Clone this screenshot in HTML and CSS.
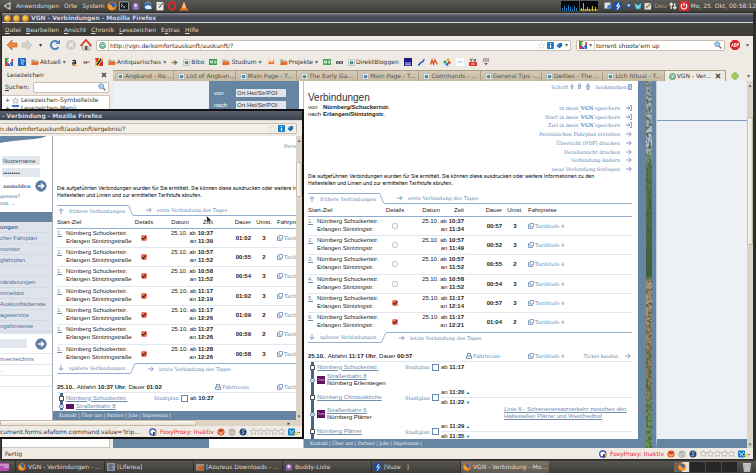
FILE: index.html
```html
<!DOCTYPE html>
<html lang="de">
<head>
<meta charset="utf-8">
<title>VGN - Verbindungen</title>
<link rel="stylesheet" href="styles.css">
</head>
<body>
<svg class="defs" aria-hidden="true">
  <symbol id="right" viewBox="0 0 6 6"><path d="M0 3H5M3 .7L5.3 3L3 5.3" fill="none" stroke="currentColor" stroke-width=".8"/></symbol>
  <symbol id="rightbar" viewBox="0 0 6 6"><path d="M0 3H4M2.2 1.2L4 3L2.2 4.8M5.4 .3V5.7M4 .4H5.6M4 5.6H5.6" fill="none" stroke="currentColor" stroke-width=".8"/></symbol>
  <symbol id="up" viewBox="0 0 6 6"><path d="M3 6V1M.7 3L3 .7L5.3 3" fill="none" stroke="currentColor" stroke-width=".8"/></symbol>
  <symbol id="down" viewBox="0 0 6 6"><path d="M3 0V5M.7 3L3 5.3L5.3 3" fill="none" stroke="currentColor" stroke-width=".8"/></symbol>
  <symbol id="size" viewBox="0 0 4 7"><path d="M2 .6L.6 3H3.4ZM1.2 3V5.6H2.8V3" fill="none" stroke="currentColor" stroke-width=".7"/></symbol>
  <symbol id="copy" viewBox="0 0 6 6"><path d="M2 .5H5.5V4H2ZM1.2 1.5H.5V5.5H4.5V4.6" fill="none" stroke="currentColor" stroke-width=".8"/></symbol>
  <symbol id="print" viewBox="0 0 6 6"><path d="M1.5 3V.5H4.5V3M.5 3H5.5V5.4H.5Z" fill="none" stroke="currentColor" stroke-width=".9"/></symbol>
  <symbol id="page" viewBox="0 0 7 7"><rect x=".5" y=".5" width="6" height="6" rx=".6" fill="#f4f4f2" stroke="#9aa3a8" stroke-width=".6"/><circle cx="3.5" cy="3.6" r="1.9" fill="#3f7fb5"/><path d="M2.2 3l1.3-.8l.6 1.2l-1 1.4z" fill="#7db34a"/></symbol>
  <symbol id="vgn" viewBox="0 0 7 7"><circle cx="3.5" cy="3.5" r="3" fill="#fff" stroke="#1f8a5a" stroke-width=".9"/><path d="M1.2 4.3L3.5 1.6L5.8 4.3M1.5 5H5.5" fill="none" stroke="#1f8a5a" stroke-width="1"/></symbol>
  <symbol id="folder" viewBox="0 0 8 7"><path d="M.3 1H3l.6 1H7V6.3H.3Z" fill="#b9a58e"/><path d="M1.3 3.4H7.8L7 6.6H.3Z" fill="#f0682c"/></symbol>
  <symbol id="firefox" viewBox="0 0 10 10"><circle cx="5" cy="5" r="4.6" fill="#e8701c"/><circle cx="5.2" cy="4.2" r="2.9" fill="#2f64ad"/><path d="M.6 3C2 2.5 3 4 5 4.2C4.3 5.6 5.5 7 8.8 6.2C7 9.6 2 10 .8 6.6Z" fill="#f59a24"/></symbol>
  <symbol id="google" viewBox="0 0 8 8"><rect width="4" height="4" fill="#2a9b3e"/><rect x="4" width="4" height="4" fill="#fff"/><rect y="4" width="3" height="4" fill="#e4362c"/><rect x="3" y="4" width="5" height="4" fill="#2b62c9"/><path d="M3 1.5H5.6V4.5H3ZM4 5L6 7.5" fill="none" stroke="#fff" stroke-width="1"/><rect x="6.3" y="1" width="1.7" height="3" fill="#e4362c"/></symbol>
  <symbol id="lens" viewBox="0 0 8 8"><path d="M4.8 4.8L7.4 7.4" stroke="#8b8174" stroke-width="1.6"/><circle cx="3.2" cy="3.2" r="2.5" fill="#a9cbee" stroke="#6d93bf" stroke-width=".8"/></symbol>
  <symbol id="star" viewBox="0 0 7 7"><path d="M3.5 .6L4.4 2.6L6.6 2.8L5 4.3L5.5 6.4L3.5 5.3L1.5 6.4L2 4.3L.4 2.8L2.6 2.6Z" fill="#f7f5f1" stroke="#9e9b95" stroke-width=".6"/></symbol>
  <symbol id="faint" viewBox="0 0 7 7"><path d="M3.5 .6L4.4 2.6L6.6 2.8L5 4.3L5.5 6.4L3.5 5.3L1.5 6.4L2 4.3L.4 2.8L2.6 2.6Z" fill="#fff" stroke="#cfccc6" stroke-width=".6"/></symbol>
  <symbol id="info" viewBox="0 0 7 7"><rect width="7" height="7" rx=".8" fill="#1c80c4"/><path d="M3.5 1V2M3.5 2.8V6" stroke="#fff" stroke-width="1.2"/></symbol>
  <symbol id="tag" viewBox="0 0 7 7"><path d="M.6 4.2L2.2 1.4L5.6 .8L6.4 3.6L3.8 6.3Z" fill="#1b66b4"/><path d="M1.5 4L3.8 1.8" stroke="#6ab2e6" stroke-width=".8"/></symbol>
  <symbol id="cross" viewBox="0 0 6 6"><path d="M1 1L5 5M5 1L1 5" stroke="#55534e" stroke-width="1.7"/></symbol>
  <symbol id="g" viewBox="0 0 8 8"><circle cx="3.8" cy="4" r="3.1" fill="#fff" stroke="#2440a8" stroke-width="1.1"/><rect x="4" y="4" width="1.8" height="3.6" fill="#273b8c"/><rect x="6" y="3" width="1.6" height="4.6" fill="#e6a33a"/></symbol>
  <symbol id="fox" viewBox="0 0 8 8"><circle cx="4" cy="4" r="3.6" fill="#d8552a"/><path d="M1 2.5L4 5L7 2.5L5.2 6.6H2.8Z" fill="#f7b48a"/><path d="M2 2L3.6 3.2M6 2L4.4 3.2" stroke="#7e2a14" stroke-width=".8"/></symbol>
  <symbol id="face" viewBox="0 0 8 8"><circle cx="4" cy="4.2" r="3.2" fill="#e5e2da" stroke="#95928b" stroke-width=".8"/><path d="M2 3H6M2.6 5.2H5.4" stroke="#85827c" stroke-width=".8"/></symbol>
  <symbol id="swirl" viewBox="0 0 8 8"><circle cx="4" cy="4" r="3.5" fill="#26446d"/><path d="M5.8 2.2C3.4 1.5 2.5 3.5 4.2 4.1C5.8 4.8 4.6 6.3 2.4 5.6" fill="none" stroke="#b9cfe6" stroke-width=".9"/></symbol>
  <symbol id="bug" viewBox="0 0 12 8"><rect width="7" height="7" y=".5" rx=".8" fill="#1480c0"/><path d="M1 2L3.5 4.2L6 2M1.6 6L3.5 4.2L5.4 6" fill="none" stroke="#d5efff" stroke-width=".9"/><circle cx="8.4" cy="5.4" r="1.9" fill="#f0d443"/><path d="M10.2 4H12L11.1 5.6Z" fill="#333"/></symbol>
  <symbol id="go" viewBox="0 0 12 12"><circle cx="6" cy="6" r="5.4" fill="#55779c" stroke="#88a1bb" stroke-width=".8"/><path d="M3 6H8.4M6 3.4L8.7 6L6 8.6" fill="none" stroke="#fff" stroke-width="1.4"/></symbol>
</svg>

<header class="panel">
  <svg class="distro" viewBox="0 0 8 8"><circle cx="4" cy="4" r="2.3" fill="none" stroke="#dcd9d2" stroke-width="1"/><circle cx="1.2" cy="4" r="1.1" fill="#dcd9d2"/><circle cx="5.6" cy="1.4" r="1.1" fill="#dcd9d2"/><circle cx="5.6" cy="6.6" r="1.1" fill="#dcd9d2"/></svg>
  <nav class="panel-menu"><a href="#">Anwendungen</a><a href="#">Orte</a><a href="#">System</a></nav>
  <div class="launchers">
    <svg class="i10"><use href="#firefox"/></svg>
    <svg class="i10" viewBox="0 0 10 10"><rect x=".5" y="1" width="9" height="8" fill="#161c22" stroke="#a8b0b6" stroke-width=".8"/><path d="M2 3L3.6 4.4L2 5.8M4 6H6" fill="none" stroke="#fff" stroke-width=".8"/></svg>
    <svg class="i10" viewBox="0 0 10 10"><path d="M2 9C0 5 2 1 5 1C9 1 9 5 8 9Z" fill="#7d5a9d"/><circle cx="4.6" cy="4.2" r="1.7" fill="#ddd0ea"/><path d="M3 7H7" stroke="#c7a8d8"/></svg>
    <svg class="i10" viewBox="0 0 10 10"><ellipse cx="5" cy="5.4" rx="4.6" ry="3.9" fill="#2f69ac"/><path d="M2 6.6C2 4 5 3.5 8 5L8.6 8H3Z" fill="#e9eef4"/><path d="M2 3C4 0 7 1 8 3" fill="none" stroke="#7fb0de"/></svg>
    <svg class="i10" viewBox="0 0 10 10"><rect x="1.5" y="1" width="7" height="8.4" fill="#f0efe9"/><path d="M3 3H7M3 5H6" stroke="#8f8f8a" stroke-width=".6"/><path d="M4 7L9 1" stroke="#66635a" stroke-width="1.1"/></svg>
    <svg class="i10" viewBox="0 0 10 10"><ellipse cx="5" cy="5" rx="3.3" ry="3.7" fill="none" stroke="#e02828" stroke-width="2"/></svg>
    <svg class="i10" viewBox="0 0 10 10"><path d="M5 .5L8 8H2Z" fill="#f08224"/><path d="M4 3.3H6M3.2 5.8H6.8" stroke="#fff" stroke-width="1.1"/><path d="M1 7.8H9L9.5 9.6H.5Z" fill="#e5711a"/></svg>
  </div>
  <div class="tray">
    <svg class="monitor" viewBox="0 0 37 10"><rect width="18" height="10" fill="#07090c"/><rect x="19" width="18" height="10" fill="#07090c"/><path d="M1.5 10V7M3.5 10V5M5.5 10V7M7.5 10V4M9.5 10V6M11.5 10V8M13.5 10V5M15.5 10V7" stroke="#1b7fc6"/><path d="M20.5 10V7M22.5 10V2M24.5 10V8M26.5 10V6M28.5 10V8M31.5 10V5M34.5 10V6" stroke="#c9b624"/><path d="M19 9H37" stroke="#e4d130"/></svg>
    <svg class="i8" viewBox="0 0 8 8"><rect x=".5" y=".5" width="6" height="6" fill="#dbe6f2"/><circle cx="5.4" cy="5" r="2.2" fill="#4a7fc4"/></svg>
    <svg class="i8" viewBox="0 0 8 8"><rect width="8" height="8" rx="1" fill="#1b4fa5"/><path d="M5 1L3 4H5.5L3 7.5" fill="none" stroke="#fff" stroke-width="1.2"/></svg>
    <svg class="i8" viewBox="0 0 8 8"><circle cx="4" cy="4" r="3" fill="#33547d"/><circle cx="4.8" cy="3.2" r="1.3" fill="#b6d3ee"/></svg>
    <svg class="i8" viewBox="0 0 8 8"><path d="M.5 1L4 3L7.5 1L6.6 6.5L4 7.8L1.4 6.5Z" fill="#43b6dc"/><path d="M2 3.6L4 5.6L6 3.6" fill="none" stroke="#e5f7fc"/></svg>
    <svg class="i8" viewBox="0 0 8 8"><rect x=".5" y="1" width="6.6" height="6.6" fill="#e1ddcf"/><path d="M2 6L7.6 .6" stroke="#77705c" stroke-width="1.1"/></svg>
    <span class="dim">Deu</span>
    <svg class="i8" viewBox="0 0 8 8"><path d="M2.2 7V1.5M.6 3L2.2 1.2L3.8 3M5.8 1V6.5M4.2 5L5.8 6.8L7.4 5" fill="none" stroke="#eeece6" stroke-width="1.2"/></svg>
    <svg class="i10" viewBox="0 0 10 10"><rect width="10" height="10" rx="1" fill="#d7292c"/><path d="M3.2 3A2.8 2.8 0 1 0 6.8 3M5 1.6V5" fill="none" stroke="#fff" stroke-width="1.1"/></svg>
    <time>Mo, 25. Okt, 00:58:12</time>
  </div>
</header>

<main class="desktop">
  <section class="window main-window">
    <div class="titlebar"><span class="orbs"><i></i><i></i><i></i></span>VGN - Verbindungen - Mozilla Firefox</div>
    <nav class="menubar">
      <a href="#"><u>D</u>atei</a><a href="#"><u>B</u>earbeiten</a><a href="#"><u>A</u>nsicht</a><a href="#"><u>C</u>hronik</a><a href="#"><u>L</u>esezeichen</a><a href="#">E<u>x</u>tras</a><a href="#"><u>H</u>ilfe</a>
    </nav>
    <div class="navbar">
      <button class="nav" aria-label="Zurück"><svg class="i12" viewBox="0 0 12 12"><path d="M1 6L6 1V4H11V8H6V11Z" fill="#ee8742" stroke="#b65c22" stroke-width=".6"/></svg></button>
      <button class="nav" aria-label="Vor"><svg class="i12" viewBox="0 0 12 12"><path d="M11 6L6 1V4H1V8H6V11Z" fill="#d5d2cc" stroke="#b9b6b0" stroke-width=".6"/></svg></button>
      <button class="nav tiny" aria-label="Verlauf">▾</button>
      <button class="nav" aria-label="Neu laden"><svg class="i12" viewBox="0 0 12 12"><path d="M9.6 8A4.1 4.1 0 1 1 8.8 3" fill="none" stroke="#4d87c7" stroke-width="2"/><path d="M6.4 5H11V.6Z" fill="#4d87c7"/></svg></button>
      <button class="nav" aria-label="Stopp"><svg class="i12" viewBox="0 0 12 12"><circle cx="6" cy="6" r="5" fill="#cfccc7"/><path d="M4 4L8 8M8 4L4 8" stroke="#f3f1ed" stroke-width="1.5"/></svg></button>
      <button class="nav" aria-label="Startseite"><svg class="i12" viewBox="0 0 12 12"><path d="M2.4 6V11H9.8V6" fill="#dcd8d2" stroke="#8a8782" stroke-width=".6"/><path d="M.6 7L6 1L11.4 7" fill="none" stroke="#cf3c30" stroke-width="1.8"/><rect x="5" y="7" width="2.4" height="4" fill="#6a5447"/></svg></button>
      <div class="field url"><svg class="i7"><use href="#vgn"/></svg><input aria-label="Adresse" value="http://vgn.de/komfortauskunft/auskunft/?"><svg class="i7"><use href="#faint"/></svg><svg class="i7"><use href="#info"/></svg><svg class="i7"><use href="#tag"/></svg><span class="caret">▾</span></div>
      <div class="field search"><svg class="i8"><use href="#google"/></svg><span class="caret">▾</span><input aria-label="Suche" value="torrent shoote'em up"><svg class="i8"><use href="#lens"/></svg></div>
      <svg class="i10" viewBox="0 0 10 10"><path d="M3 0H7L10 3V7L7 10H3L0 7V3Z" fill="#d9262b"/><path d="M1.5 6.6L2.5 3.6L3.5 6.6M4.5 3.5V6.5H6V3.5ZM7.2 6.8V3.5H8.6V5H7.2" fill="none" stroke="#fff" stroke-width=".8"/></svg>
      <span class="caret end">▾</span>
    </div>
    <div class="bookmarks">
      <svg class="i8"><use href="#google"/></svg>
      <svg class="i8" viewBox="0 0 8 8"><rect width="8" height="8" rx=".8" fill="#1763c0"/><path d="M2 2H6V4H3.4V6H6" fill="none" stroke="#a9d0f6"/></svg>
      <a href="#"><svg class="i8"><use href="#folder"/></svg>Aktuell <b>▾</b></a>
      <svg class="i7" viewBox="0 0 7 7"><path d="M1.5 2C3 .5 5 1.5 4.6 3V5M4.5 3C1 3 1 5.6 3 5.2L4.6 4" fill="none" stroke="#222" stroke-width="1.1"/><path d="M1 6.4H6" stroke="#f09a2a"/></svg>
      <svg class="i7" viewBox="0 0 7 7"><path d="M.5 3.5H2.5" stroke="#d33" stroke-width="1.8"/><path d="M2.5 3.5H4" stroke="#37a" stroke-width="2.4"/><path d="M4 3H6.8" stroke="#e5a12c" stroke-width="1.8"/></svg>
      <svg class="i8" viewBox="0 0 8 8"><rect width="8" height="8" fill="#f3c83b"/><path d="M0 0H4L2 5ZM5 5L8 2V8H4Z" fill="#d73328"/><path d="M2 7L6 1" stroke="#1c2f86" stroke-width="1.5"/></svg>
      <a href="#"><svg class="i8"><use href="#folder"/></svg>Antiquarisches <b>▾</b></a>
      <svg class="i7" viewBox="0 0 7 7"><path d="M.5 3.5H6.5M4 1V6" stroke="#a8894c" stroke-width="1.3"/><path d="M3.5 3.5H6" stroke="#3a6d49" stroke-width="1.6"/></svg>
      <a href="#"><svg class="i7"><use href="#page"/></svg>Bibo</a>
      <svg class="i8" viewBox="0 0 8 8"><rect y="1" width="8" height="6" fill="#3aa04b"/><path d="M1.5 3H3.5V5H1.5ZM5 3H6.8V5H5" fill="none" stroke="#e7f6e7" stroke-width=".9"/></svg>
      <a href="#"><svg class="i8"><use href="#folder"/></svg>Studium <b>▾</b></a>
      <svg class="i8" viewBox="0 0 8 8"><rect y="1" width="8" height="6" fill="#f6ddc8"/><path d="M1 6L3 3L5 5L7 2V6Z" fill="#ef6d25"/></svg>
      <a href="#"><svg class="i8"><use href="#folder"/></svg>Projekte <b>▾</b></a>
      <svg class="i8" viewBox="0 0 8 8"><rect y="1" width="8" height="6" fill="#4aa657"/><path d="M1.5 3H3.5V5H1.5ZM5 3H6.8V5H5" fill="none" stroke="#e7f6e7" stroke-width=".9"/></svg>
      <svg class="i7" viewBox="0 0 7 7"><path d="M0 3.5H7" stroke="#333" stroke-width="2.2"/><path d="M1 3.5H3M4 3.5H6" stroke="#cfcfcf" stroke-width=".8"/></svg>
      <a href="#"><svg class="i7"><use href="#page"/></svg>DirektBloggen</a>
      <svg class="i8" viewBox="0 0 8 8"><rect width="8" height="8" fill="#1a1a8c"/><path d="M1 5H7M1 6.8H7" stroke="#dcdcf5" stroke-width=".9"/></svg>
      <svg class="i8" viewBox="0 0 8 8"><path d="M1 7C3 7 3 4 5 4S6 1.5 7.5 1.5" fill="none" stroke="#2b50b8" stroke-width="1.5"/></svg>
      <svg class="i8" viewBox="0 0 8 8"><path d="M.5 6.5L2 2L3.5 6L5 2L7.4 6.5" fill="none" stroke="#d8572c" stroke-width="1.4"/></svg>
      <svg class="i8" viewBox="0 0 8 8"><circle cx="2" cy="4" r="1.5" fill="#2ca04a"/><circle cx="5" cy="1.8" r="1.5" fill="#e4b42d"/><circle cx="6.2" cy="4.6" r="1.4" fill="#d9342c"/><circle cx="4" cy="6.4" r="1.4" fill="#2f6bd0"/></svg>
      <svg class="i8" viewBox="0 0 8 8"><rect width="8" height="8" fill="#fbfbfb"/><path d="M1.5 4H6.5" stroke="#9fc3dd"/></svg>
      <svg class="i8" viewBox="0 0 8 8"><path d="M1 .5L2.2 2.4V3.6M3.4 .5L2.2 2.4M5 1V3H6.6V1" fill="none" stroke="#333" stroke-width=".8"/><rect y="4" width="8" height="4" rx="1" fill="#e12a23"/><path d="M2 6H6" stroke="#fff" stroke-width=".9"/></svg>
      <svg class="i8" viewBox="0 0 8 8"><path d="M1 1H7M1 3H7" stroke="#5a4650" stroke-width="1.2" stroke-dasharray="1.6 .6"/><path d="M2 5H6L4 7.6Z" fill="#8a5a66"/></svg>
    </div>
    <div class="browser">
      <aside class="sidebar">
        <div class="side-head">Lesezeichen<button class="plain" aria-label="Schließen"><svg class="i6"><use href="#cross"/></svg></button></div>
        <div class="side-search"><label for="q"><u>S</u>uchen:</label><div class="field"><input id="q"><svg class="i8"><use href="#lens"/></svg></div></div>
        <ul class="tree">
          <li><i>+</i><svg class="i7"><use href="#star"/></svg>Lesezeichen-Symbolleiste</li>
          <li><i>+</i><svg class="i7" viewBox="0 0 7 7"><rect width="7" height="2" fill="#3c78c4"/><path d="M1 4H6M1 6H6" stroke="#999" stroke-width=".8"/></svg>Lesezeichen-Menü</li>
        </ul>
      </aside>
      <div class="view">
        <div class="tabs">
          <button class="tab"><svg class="i7"><use href="#page"/></svg>Angband - Ro...</button>
          <button class="tab"><svg class="i7"><use href="#page"/></svg>List of Angban...</button>
          <button class="tab"><svg class="i7"><use href="#page"/></svg>Main Page - T...</button>
          <button class="tab"><svg class="i7"><use href="#page"/></svg>The Early Ga...</button>
          <button class="tab"><svg class="i7"><use href="#page"/></svg>Main Page - T...</button>
          <button class="tab"><svg class="i7"><use href="#page"/></svg>Commands - ...</button>
          <button class="tab"><svg class="i7"><use href="#page"/></svg>General Tips -...</button>
          <button class="tab"><svg class="i7"><use href="#page"/></svg>Deities - The ...</button>
          <button class="tab"><svg class="i7"><use href="#page"/></svg>Lich Ritual - T...</button>
          <button class="tab active"><svg class="i7"><use href="#vgn"/></svg>VGN - Ver... <svg class="i6 close"><use href="#cross"/></svg></button>
          <span class="tab-end"><svg class="i8" viewBox="0 0 8 8"><path d="M4 .5V7.5M.5 4H7.5" stroke="#6f9e2c" stroke-width="3"/><path d="M4 1V7M1 4H7" stroke="#a4d04f" stroke-width="1.8"/></svg><span class="caret">▾</span></span>
        </div>
        <div class="site">
          <div class="col pale"></div>
          <form class="col finder">
            <label>von<input value="Ort Hst/Str/POI"></label>
            <label>nach<input value="Ort Hst/Str/POI"></label>
          </form>
          <div class="col seam"></div>
          <article class="col sheet">
            <div class="body">
              <div class="tools"><a href="#">Schrift</a><svg class="i6"><use href="#size"/></svg><svg class="i7"><use href="#size"/></svg><svg class="i8"><use href="#size"/></svg><a class="mark-link" href="#">bookmarken</a><svg class="mark" viewBox="0 0 4 6"><path d="M.5 .5H3.5V5.5H.5ZM1.8 1V5" fill="none" stroke="currentColor" stroke-width=".8"/></svg></div>
              <div class="head">
                <div>
                  <h1>Verbindungen</h1>
                  <dl><dt>von</dt><dd>Nürnberg/Schuckertstr.</dd><dt>nach</dt><dd>Erlangen/Stintzingstr.</dd></dl>
                </div>
                <ul class="actions">
                  <li><a href="#">in mein_<b>VGN</b> speichern<svg class="i6"><use href="#rightbar"/></svg></a></li>
                  <li><a href="#">Start in mein_<b>VGN</b> speichern<svg class="i6"><use href="#rightbar"/></svg></a></li>
                  <li><a href="#">Ziel in mein_<b>VGN</b> speichern<svg class="i6"><use href="#rightbar"/></svg></a></li>
                  <li><a href="#">Persönlichen Fahrplan erstellen<svg class="i6"><use href="#right"/></svg></a></li>
                  <li><a href="#">Übersicht (PDF) drucken<svg class="i6"><use href="#right"/></svg></a></li>
                  <li><a href="#">Detailansicht drucken<svg class="i6"><use href="#right"/></svg></a></li>
                  <li><a href="#">Verbindung ändern<svg class="i6"><use href="#right"/></svg></a></li>
                  <li><a href="#">neue Verbindung festlegen<svg class="i6"><use href="#right"/></svg></a></li>
                </ul>
              </div>
              <p class="intro">Die aufgeführten Verbindungen wurden für Sie ermittelt. Sie können diese ausdrucken oder weitere Informationen zu den<br>Haltestellen und Linien und zur ermittelten Tarifstufe abrufen.</p>
              <div class="pager top"><a class="lead" href="#"><svg class="i6"><use href="#up"/></svg>frühere Verbindungen</a><svg class="slant" viewBox="0 0 6 11"><path d="M0 .5C2 .5 3 10.5 6 10.5" fill="none" stroke="#92add0"/></svg><a class="rest" href="#"><svg class="i6"><use href="#right"/></svg>erste Verbindung des Tages</a></div>
              <table class="trips">
                <colgroup><col class="c1"><col class="c2"><col class="c3"><col class="c4"><col class="c5"><col class="c6"><col></colgroup>
                <thead><tr><th colspan="2">Start-Ziel</th><th class="ctr">Details</th><th class="when"><span>Datum</span><span>Zeit</span></th><th class="num">Dauer</th><th class="ctr">Umst.</th><th>Fahrpreise</th></tr></thead>
                <tbody>
                <tr><td><a href="#">1.</a></td><td>Nürnberg Schuckertstr.<br>Erlangen Stintzingstr.</td><td class="ctr"><input type="checkbox" aria-label="Details 1"></td><td class="when">25.10. ab <b>10:37</b><br>an <b>11:34</b></td><td class="num">00:57</td><td class="ctr"><b>3</b></td><td><a class="fare" href="#"><svg class="i6"><use href="#copy"/></svg>Tarifstufe 4</a></td></tr>
                <tr><td><a href="#">2.</a></td><td>Nürnberg Schuckertstr.<br>Erlangen Stintzingstr.</td><td class="ctr"><input type="checkbox" aria-label="Details 2"></td><td class="when">25.10. ab <b>10:57</b><br>an <b>11:49</b></td><td class="num">00:52</td><td class="ctr"><b>3</b></td><td><a class="fare" href="#"><svg class="i6"><use href="#copy"/></svg>Tarifstufe 4</a></td></tr>
                <tr><td><a href="#">3.</a></td><td>Nürnberg Schuckertstr.<br>Erlangen Stintzingstr.</td><td class="ctr"><input type="checkbox" aria-label="Details 3"></td><td class="when">25.10. ab <b>10:57</b><br>an <b>11:52</b></td><td class="num">00:55</td><td class="ctr"><b>2</b></td><td><a class="fare" href="#"><svg class="i6"><use href="#copy"/></svg>Tarifstufe 4</a></td></tr>
                <tr><td><a href="#">4.</a></td><td>Nürnberg Schuckertstr.<br>Erlangen Stintzingstr.</td><td class="ctr"><input type="checkbox" aria-label="Details 4"></td><td class="when">25.10. ab <b>10:58</b><br>an <b>11:52</b></td><td class="num">00:54</td><td class="ctr"><b>3</b></td><td><a class="fare" href="#"><svg class="i6"><use href="#copy"/></svg>Tarifstufe 4</a></td></tr>
                <tr><td><a href="#">5.</a></td><td>Nürnberg Schuckertstr.<br>Erlangen Stintzingstr.</td><td class="ctr"><input type="checkbox" checked aria-label="Details 5"></td><td class="when">25.10. ab <b>11:17</b><br>an <b>12:14</b></td><td class="num">00:57</td><td class="ctr"><b>3</b></td><td><a class="fare" href="#"><svg class="i6"><use href="#copy"/></svg>Tarifstufe 4</a></td></tr>
                <tr><td><a href="#">6.</a></td><td>Nürnberg Schuckertstr.<br>Erlangen Stintzingstr.</td><td class="ctr"><input type="checkbox" checked aria-label="Details 6"></td><td class="when">25.10. ab <b>11:17</b><br>an <b>12:21</b></td><td class="num">01:04</td><td class="ctr"><b>2</b></td><td><a class="fare" href="#"><svg class="i6"><use href="#copy"/></svg>Tarifstufe 4</a></td></tr>
                </tbody>
              </table>
              <div class="pager bottom"><a class="lead" href="#"><svg class="i6"><use href="#down"/></svg>spätere Verbindungen</a><svg class="slant" viewBox="0 0 6 11"><path d="M0 10.5C2 10.5 3 .5 6 .5" fill="none" stroke="#92add0"/></svg><a class="rest" href="#"><svg class="i6"><use href="#right"/></svg>letzte Verbindung des Tages</a></div>
              <div class="summary"><span><b>25.10.</b>, Abfahrt <b>11:17 Uhr</b>, Dauer <b>00:57</b></span><a class="fare route" href="#"><svg class="i6"><use href="#print"/></svg>Fahrtroute</a><a class="fare tariff" href="#"><svg class="i6"><use href="#copy"/></svg>Tarifstufe 4</a><a class="fare buy" href="#">Ticket kaufen<svg class="i6"><use href="#right"/></svg></a></div>
              <ol class="legs">
                <li class="stop first"><i class="node"></i><a href="#">Nürnberg Schuckertstr.</a><a class="fare plan" href="#">Stadtplan</a><div class="times"><span>ab <b>11:17</b></span></div></li>
                <li class="ride"><i class="node plus"></i><i class="tram">Tram</i><div><a href="#">Straßenbahn 8</a><br>Nürnberg Erlenstegen</div></li>
                <li class="stop"><i class="node"></i><a href="#">Nürnberg Christuskirche</a><a class="fare plan" href="#">Stadtplan</a><div class="times"><span>an <b>11:20</b> <em>▲</em></span><span>ab <b>11:22</b> <em>▼</em></span></div></li>
                <li class="ride"><i class="node plus"></i><i class="tram">Tram</i><div><a href="#">Straßenbahn 6</a><br>Nürnberg Plärrer</div><a class="note" href="#">Linie 6 - Schienenersatzverkehr zwischen den<br>Haltestellen Plärrer und Westfriedhof</a></li>
                <li class="stop"><i class="node"></i><a href="#">Nürnberg Plärrer</a><a class="fare plan" href="#">Stadtplan</a><div class="times"><span>an <b>11:29</b> <em>▲</em></span><span>ab <b>11:35</b> <em>▼</em></span></div></li>
              </ol>
            </div>
            <footer class="foot"><a href="#">Kontakt</a> | <a href="#">Über uns</a> | <a href="#">Partner</a> | <a href="#">Jobs</a> | <a href="#">Impressum</a> |</footer>
          </article>
          <div class="col band"></div>
          <svg class="photo" viewBox="0 0 6 368" preserveAspectRatio="none">
            <defs>
              <linearGradient id="sky" x1="0" y1="0" x2="0" y2="1"><stop offset="0" stop-color="#8d9aa3"/><stop offset=".17" stop-color="#b9c3d4"/><stop offset=".24" stop-color="#5d7a4c"/><stop offset=".53" stop-color="#3c6136"/><stop offset=".55" stop-color="#b29b70"/><stop offset=".8" stop-color="#937d55"/><stop offset=".87" stop-color="#7d8a52"/><stop offset="1" stop-color="#679a45"/></linearGradient>
              <filter id="leaves" x="0" y="0" width="1" height="1"><feTurbulence type="fractalNoise" baseFrequency=".35" numOctaves="3" seed="4"/><feColorMatrix values="0 0 0 0 .06  0 0 0 0 .1  0 0 0 0 .06  5 0 0 0 -2.2"/></filter>
            </defs>
            <rect width="6" height="368" fill="url(#sky)"/><rect width="6" height="368" filter="url(#leaves)" opacity=".8"/>
          </svg>
          <div class="col band"></div>
          <div class="col pale right"><i></i></div>
          <div class="scroll"><i>▴</i><b></b><i>▾</i></div>
        </div>
      </div>
    </div>
    <div class="status"><span>Fertig</span><div class="addons"><svg class="i8"><use href="#g"/></svg><em>FoxyProxy: Inaktiv</em><svg class="i8"><use href="#fox"/></svg><svg class="i8"><use href="#face"/></svg><svg class="i8"><use href="#swirl"/></svg><span class="stars"><svg class="i7"><use href="#star"/></svg><svg class="i7"><use href="#star"/></svg><svg class="i7"><use href="#star"/></svg><svg class="i7"><use href="#star"/></svg><svg class="i7"><use href="#star"/></svg></span><svg class="i12"><use href="#bug"/></svg></div></div>
  </section>

  <section class="window popup">
    <div class="titlebar">- Verbindung - Mozilla Firefox</div>
    <div class="navbar"><div class="field url"><input aria-label="Adresse" value="n.de/komfortauskunft/auskunft/ergebnis/?"><svg class="i7"><use href="#faint"/></svg><svg class="i7"><use href="#info"/></svg><svg class="i7"><use href="#tag"/></svg></div></div>
    <div class="pop-view">
      <aside class="login">
        <svg class="swoosh" viewBox="0 0 52 8" preserveAspectRatio="none"><path d="M0 0H46C42 4 20 3 0 7Z" fill="#6685a3"/></svg>
        <form class="cred"><input aria-label="Nutzername" value="Nutzername"><input type="password" aria-label="Passwort" value="passwort"></form>
        <div class="send"><b>anmelden</b><button class="plain" aria-label="Anmelden"><svg class="i12"><use href="#go"/></svg></button></div>
        <div class="hints"><a href="#">gessen?</a><a href="#">ren ...</a></div>
        <div class="bar"></div>
        <nav class="side-nav"><a class="on" href="#">ungen</a><a href="#">cher Fahrplan</a><a href="#">monitor</a><a href="#">gfahrplan</a><i></i><a href="#">nänderungen</a><a href="#">mmeltaxi</a><a href="#">Auskunftsdienste</a><a href="#">ageservice</a><a href="#">ngshinweise</a></nav>
        <form class="find"><input aria-label="Suche"><button class="plain" aria-label="Suchen"><svg class="i12"><use href="#go"/></svg></button></form>
        <nav class="links"><a href="#">rtverzeichnis</a><a href="#">.</a><a href="#"></a></nav>
      </aside>
      <div class="pop-page">
        <div class="clip"><div class="body">
          <a class="fare corner" href="#">Persönlichen Fahrplan erstellen</a>
          <p class="intro">Die aufgeführten Verbindungen wurden für Sie ermittelt. Sie können diese ausdrucken oder weitere Informationen zu den<br>Haltestellen und Linien und zur ermittelten Tarifstufe abrufen.</p>
          <div class="pager top"><a class="lead" href="#"><svg class="i6"><use href="#up"/></svg>frühere Verbindungen</a><svg class="slant" viewBox="0 0 6 11"><path d="M0 .5C2 .5 3 10.5 6 10.5" fill="none" stroke="#92add0"/></svg><a class="rest" href="#"><svg class="i6"><use href="#right"/></svg>erste Verbindung des Tages</a></div>
          <table class="trips">
            <colgroup><col class="c1"><col class="c2"><col class="c3"><col class="c4"><col class="c5"><col class="c6"><col></colgroup>
            <thead><tr><th colspan="2">Start-Ziel</th><th class="ctr">Details</th><th class="when"><span>Datum</span><span>Zeit</span></th><th class="num">Dauer</th><th class="ctr">Umst.</th><th>Fahrpreise</th></tr></thead>
            <tbody>
            <tr><td><a href="#">1.</a></td><td>Nürnberg Schuckertstr.<br>Erlangen Stintzingstraße</td><td class="ctr"><input type="checkbox" checked aria-label="Details"></td><td class="when">25.10. ab <b>10:37</b><br>an <b>11:39</b></td><td class="num">01:02</td><td class="ctr"><b>3</b></td><td><a class="fare" href="#"><svg class="i6"><use href="#copy"/></svg>Tarifstufe 4</a></td></tr>
            <tr><td><a href="#">1.</a></td><td>Nürnberg Schuckertstr.<br>Erlangen Stintzingstraße</td><td class="ctr"><input type="checkbox" checked aria-label="Details"></td><td class="when">25.10. ab <b>10:57</b><br>an <b>11:52</b></td><td class="num">00:55</td><td class="ctr"><b>2</b></td><td><a class="fare" href="#"><svg class="i6"><use href="#copy"/></svg>Tarifstufe 4</a></td></tr>
            <tr><td><a href="#">1.</a></td><td>Nürnberg Schuckertstr.<br>Erlangen Stintzingstraße</td><td class="ctr"><input type="checkbox" checked aria-label="Details"></td><td class="when">25.10. ab <b>10:58</b><br>an <b>11:52</b></td><td class="num">00:54</td><td class="ctr"><b>3</b></td><td><a class="fare" href="#"><svg class="i6"><use href="#copy"/></svg>Tarifstufe 4</a></td></tr>
            <tr><td><a href="#">1.</a></td><td>Nürnberg Schuckertstr.<br>Erlangen Stintzingstraße</td><td class="ctr"><input type="checkbox" checked aria-label="Details"></td><td class="when">25.10. ab <b>11:17</b><br>an <b>12:19</b></td><td class="num">01:02</td><td class="ctr"><b>3</b></td><td><a class="fare" href="#"><svg class="i6"><use href="#copy"/></svg>Tarifstufe 4</a></td></tr>
            <tr><td><a href="#">1.</a></td><td>Nürnberg Schuckertstr.<br>Erlangen Stintzingstraße</td><td class="ctr"><input type="checkbox" checked aria-label="Details"></td><td class="when">25.10. ab <b>11:17</b><br>an <b>12:26</b></td><td class="num">01:09</td><td class="ctr"><b>2</b></td><td><a class="fare" href="#"><svg class="i6"><use href="#copy"/></svg>Tarifstufe 4</a></td></tr>
            <tr><td><a href="#">1.</a></td><td>Nürnberg Schuckertstr.<br>Erlangen Stintzingstraße</td><td class="ctr"><input type="checkbox" checked aria-label="Details"></td><td class="when">25.10. ab <b>11:27</b><br>an <b>12:26</b></td><td class="num">00:59</td><td class="ctr"><b>2</b></td><td><a class="fare" href="#"><svg class="i6"><use href="#copy"/></svg>Tarifstufe 4</a></td></tr>
            <tr><td><a href="#">1.</a></td><td>Nürnberg Schuckertstr.<br>Erlangen Stintzingstraße</td><td class="ctr"><input type="checkbox" checked aria-label="Details"></td><td class="when">25.10. ab <b>11:28</b><br>an <b>12:26</b></td><td class="num">00:58</td><td class="ctr"><b>3</b></td><td><a class="fare" href="#"><svg class="i6"><use href="#copy"/></svg>Tarifstufe 4</a></td></tr>
            </tbody>
          </table>
          <div class="pager bottom"><a class="lead" href="#"><svg class="i6"><use href="#down"/></svg>spätere Verbindungen</a><svg class="slant" viewBox="0 0 6 11"><path d="M0 10.5C2 10.5 3 .5 6 .5" fill="none" stroke="#92add0"/></svg><a class="rest" href="#"><svg class="i6"><use href="#right"/></svg>letzte Verbindung des Tages</a></div>
          <div class="summary"><span><b>25.10.</b>, Abfahrt <b>10:37 Uhr</b>, Dauer <b>01:02</b></span><a class="fare route" href="#"><svg class="i6"><use href="#print"/></svg>Fahrtroute</a><a class="fare tariff" href="#"><svg class="i6"><use href="#copy"/></svg>Tarifstufe 4</a></div>
          <ol class="legs">
            <li class="stop first"><i class="node"></i><a href="#">Nürnberg Schuckertstr.</a><a class="fare plan" href="#">Stadtplan</a><div class="times"><span>ab <b>10:37</b></span></div></li>
            <li class="ride cut"><i class="node plus"></i><i class="tram"></i><div><a href="#">Straßenbahn 8</a></div></li>
          </ol>
        </div></div>
        <footer class="foot"><a href="#">Kontakt</a> | <a href="#">Über uns</a> | <a href="#">Partner</a> | <a href="#">Jobs</a> | <a href="#">Impressum</a> |</footer>
      </div>
      <div class="scroll"><i>▴</i><b></b><i>▾</i></div>
    </div>
    <div class="hscroll"><b></b><i>▸</i></div>
    <div class="status"><span>cument.forms.efaform.command.value='trip...</span><div class="addons"><svg class="i8"><use href="#g"/></svg><em>FoxyProxy: Inaktiv</em><svg class="i8"><use href="#fox"/></svg><svg class="i8"><use href="#face"/></svg><svg class="i8"><use href="#swirl"/></svg><span class="stars"><svg class="i7"><use href="#star"/></svg><svg class="i7"><use href="#star"/></svg><svg class="i7"><use href="#star"/></svg><svg class="i7"><use href="#star"/></svg><svg class="i7"><use href="#star"/></svg></span><svg class="i12"><use href="#bug"/></svg></div></div>
  </section>
  <svg class="cursor" viewBox="0 0 7 10"><path d="M.6 .6V8L2.4 6.4L3.6 9.2L4.8 8.6L3.6 6H6Z" fill="#222" stroke="#fff" stroke-width=".6"/></svg>
</main>

<footer class="taskbar">
  <svg class="i10 desk" viewBox="0 0 10 10"><rect x="0" y="1" width="9" height="8" fill="#b24fb0"/><path d="M0 3H9M4 5H9" stroke="#ecd0ea"/></svg>
  <div class="tasks">
    <button><svg class="i8"><use href="#firefox"/></svg>VGN - Verbindungen - ...</button>
    <button><svg class="i8" viewBox="0 0 8 8"><rect width="8" height="8" fill="#8b97a5"/><path d="M1.5 2H6.5M1.5 4H5M1.5 6H6" stroke="#33404e" stroke-width=".9"/></svg>[Liferea]</button>
    <button><svg class="i8" viewBox="0 0 8 8"><rect y="1" width="8" height="6.6" fill="#9c9084"/><path d="M2 3H8V7.6H1Z" fill="#c26437"/></svg>[Azureus Downloads - ...</button>
    <button><svg class="i8" viewBox="0 0 8 8"><path d="M1 7.5C0 4 1.5 .6 4 .6C7.5 .6 7.5 4 6.6 7.5Z" fill="#8e62ac"/><circle cx="3.8" cy="3.4" r="1.5" fill="#eee2f3"/></svg>Buddy-Liste</button>
    <button><svg class="i8" viewBox="0 0 8 8"><rect width="8" height="8" rx="1" fill="#1c4a98"/><path d="M5 1L3 4H5.5L3 7.5" fill="none" stroke="#b9dafa" stroke-width="1.2"/></svg>[Vuze &nbsp; ]</button>
    <button class="active"><svg class="i8"><use href="#firefox"/></svg>VGN - Verbindung - Mo...</button>
  </div>
  <div class="spaces"><i class="on"><svg class="i8"><use href="#firefox"/></svg></i><i></i><i></i><i></i></div>
  <svg class="i10 trash" viewBox="0 0 10 10"><path d="M1.5 2H8.5L7.8 9.6H2.2Z" fill="#a7a9a8" stroke="#d7d9d8" stroke-width=".7"/><path d="M1 1.6H9M4 3.5V8.5M6 3.5V8.5" stroke="#e8e8e8" stroke-width=".8"/></svg>
</footer>
</body>
</html>
```
FILE: styles.css
```css
* { box-sizing: border-box; }
:root {
  --ui: "DejaVu Sans", sans-serif;
  --text: "Liberation Sans", sans-serif;
  --serif: "DejaVu Serif", serif;
  --blue: #6685a3;
  --link: #6488b2;
  --line: #92add0;
  --hair: #e3e7ef;
  --chrome: #efebe4;
}
body { margin: 0; height: 100vh; overflow: hidden; display: flex; flex-direction: column; background: #3c3b37; font: 6px/8px var(--ui); color: #33322f; }
a { color: inherit; text-decoration: none; }
button { font: inherit; color: inherit; border: 0; padding: 0; background: none; }
input { font: inherit; color: inherit; border: 0; padding: 0; background: none; min-width: 0; outline: 0; }
ul, ol, dl, h1, p, dd { margin: 0; padding: 0; list-style: none; }
i, em { font-style: normal; }
svg { flex: none; display: block; }
.defs { position: absolute; width: 0; height: 0; }
.i6 { width: 6px; height: 6px; }
.i7 { width: 7px; height: 7px; }
.i8 { width: 8px; height: 8px; }
.i10 { width: 10px; height: 10px; }
.i12 { width: 12px; height: 12px; }
.plain { display: flex; }
.caret { color: #6f6b64; }

/* desktop panels */
.panel { flex: none; height: 12px; display: flex; align-items: center; padding: 0 0 0 4px; background: linear-gradient(#5c5b56, #3f3e3a); color: #dfdbd2; white-space: nowrap; }
.distro { width: 8px; height: 8px; margin-right: 4px; }
.panel-menu { display: flex; gap: 5px; }
.launchers { display: flex; align-items: center; gap: 2px; margin-left: 2px; }
.tray { margin-left: auto; display: flex; align-items: center; gap: 2px; }
.monitor { width: 37px; height: 10px; margin-right: 4px; }
.dim { color: #a39f96; }
.desktop { flex: 1; min-height: 0; position: relative; display: flex; padding: 0 0 1px 1px; }
.taskbar { flex: none; height: 12px; display: flex; align-items: center; background: linear-gradient(#56554f, #3d3c38); color: #dfdbd2; }
.desk { margin-right: 5px; }
.tasks { flex: 1; display: flex; }
.tasks button { flex: 0 1 89px; height: 12px; display: flex; align-items: center; gap: 2px; padding: 0 2px; border-left: 1px solid #2f2e2b; white-space: nowrap; }
.tasks .active { background: linear-gradient(#7d7468, #625a50); }
.spaces { display: flex; height: 10px; gap: 1px; margin-right: 5px; }
.spaces i { width: 15px; background: #262626; display: flex; justify-content: center; align-items: center; }
.spaces .on { background: linear-gradient(90deg, #6d655a 50%, #e4ded4 50%); }
.trash { margin-right: 4px; }

/* window frame */
.window { display: flex; flex-direction: column; background: var(--chrome); }
.main-window { flex: 1; min-width: 0; border: 1px solid #2a2a28; border-right: 3px solid #2d2d2a; }
.titlebar { flex: none; height: 10px; display: flex; align-items: center; font-weight: bold; color: #d3d6de; background: linear-gradient(#6d7083, #454859 40%, #4b4e60); border: solid #d8d8d4; border-width: 1px 0; border-top-color: #8d8d88; white-space: nowrap; }
.orbs { display: flex; gap: 2px; margin: 0 2px; }
.orbs i { width: 7px; height: 7px; border-radius: 50%; background: radial-gradient(circle at 40% 40%, #ffdf7a, #d88c12 60%, #5b3808); }
.menubar { flex: none; height: 13px; display: flex; align-items: center; gap: 5px; padding-left: 3px; background: linear-gradient(#45443f, #3b3a36); color: #dfdbd2; }
.navbar { flex: none; height: 18px; display: flex; align-items: center; padding: 0 2px; }
.nav { width: 15px; display: flex; justify-content: center; }
.nav.tiny { width: 13px; }
.nav.tiny + .nav { margin-right: 1px; }
.field { display: flex; align-items: center; gap: 2px; height: 11px; padding: 0 2px; background: #fff; border: 1px solid #c6bfb2; border-radius: 2px; }
.field input { flex: 1; width: 0; height: 9px; }
.url { flex: 1; margin: 0 5px 0 3px; }
.url input, .search input { border-left: 1px solid #d6d1c7; padding-left: 1px; }
.search { width: 149px; margin-right: 5px; }
.end { margin: 0 2px 0 6px; }
.bookmarks { flex: none; height: 16px; display: flex; align-items: center; gap: 5px; padding-left: 3px; white-space: nowrap; overflow: hidden; }
.bookmarks a { display: flex; align-items: center; gap: 1px; }
.bookmarks b { font-weight: normal; color: #6f6b64; margin-left: 1px; }
.browser { flex: 1; min-height: 0; display: flex; }
.sidebar { width: 108px; flex: none; display: flex; flex-direction: column; }
.side-head { height: 9px; display: flex; align-items: center; justify-content: space-between; padding: 0 3px 0 5px; }
.side-search { height: 16px; display: flex; align-items: center; gap: 4px; padding: 0 1px 0 3px; }
.side-search .field { flex: 1; }
.tree { flex: 1; min-height: 0; overflow: hidden; background: #fff; border: 1px solid #cdc6b9; border-left: 0; }
.tree li { display: flex; align-items: center; gap: 2px; height: 8px; padding-left: 3px; white-space: nowrap; }
.tree i { width: 5px; }
.view { flex: 1; min-width: 0; margin-left: 3px; display: flex; flex-direction: column; }
.tabs { flex: none; height: 11px; display: flex; background: #cfc4b0; }
.tab { flex: 1 1 0; min-width: 0; display: flex; align-items: center; gap: 1px; padding-left: 4px; white-space: nowrap; overflow: hidden; color: #57534b; background: linear-gradient(#d5cbb8, #c5b99f); border: solid #ab9f87; border-width: 1px 1px 0 0; }
.tab.active { background: var(--chrome); color: #33322f; }
.close { margin-left: 3px; }
.tab-end { width: 27px; display: flex; align-items: center; justify-content: space-between; padding: 0 3px 0 5px; background: var(--chrome); }

/* timetable site */
.site { flex: 1; min-height: 0; display: flex; background: #fff; font-family: var(--text); }
.col { flex: none; }
.pale { width: 96px; background: #edf0f4; border-bottom: 9px solid var(--blue); }
.finder { width: 90px; height: 100%; padding: 8px 13px 0 5px; background: linear-gradient(var(--blue), var(--blue)) 0 0 / 100% calc(100% - 9px) no-repeat; color: #fff; }
.finder label { display: flex; align-items: center; justify-content: space-between; height: 8px; margin-bottom: 4px; }
.finder input { width: 50px; height: 8px; padding-left: 1px; background: #dfe6ee; color: #333; }
.seam { width: 5px; border: solid #bfc3c8; border-width: 0 1px 0 0; background: #fff; }
.sheet { width: 334px; display: flex; flex-direction: column; }
.sheet > .body { flex: 1; min-height: 0; overflow: hidden; padding: 0 6px 0 4px; }
.body { color: #222; line-height: 7px; white-space: nowrap; }
.tools, .actions, .pager, .fare { font: 5px/8px var(--serif); color: var(--link); }
.tools { height: 11px; display: flex; align-items: center; justify-content: flex-end; gap: 1px; }
.mark { width: 4px; height: 6px; }
.mark-link { margin-left: 2px; }
.head { display: flex; justify-content: space-between; height: 81px; }
h1 { font: 10px/12px var(--text); color: #333; }
dl { display: grid; grid-template-columns: 15px auto; }
dd { font-weight: bold; }
.actions { display: flex; flex-direction: column; justify-content: space-between; padding: 12px 0 0; }
.actions a { display: flex; justify-content: flex-end; align-items: center; white-space: pre; }
.actions svg { margin-left: 6px; }
.intro { margin-bottom: 6px; font: 5px/7px Inter, var(--text); color: #000; }
.pager { display: flex; height: 11px; }
.pager a { display: flex; align-items: center; }
.lead { width: 71px; gap: 5px; padding-left: 1px; border: solid var(--line); border-width: 1px 0 0; }
.rest { flex: 1; gap: 5px; padding-left: 12px; border: solid var(--line); border-width: 0 0 1px; }
.bottom .lead { width: 73px; border-width: 0 0 1px; }
.bottom .rest { border-width: 1px 0 0; }
.slant { width: 6px; height: 11px; }
.trips { width: 100%; table-layout: fixed; border-collapse: collapse; line-height: 8px; }
.trips th { height: 12px; padding: 0; font-weight: normal; text-align: left; border-bottom: 1px solid var(--line); }
.trips td { padding: 0; }
.trips tbody tr { height: 19px; border-bottom: 1px solid var(--hair); }
.trips tbody tr:nth-child(3n) { height: 20px; }
.trips tbody tr:last-child { border-bottom: 0; }
.c1 { width: 9px; }
.c2 { width: 65px; }
.c3 { width: 26px; }
.c4 { width: 56px; }
.c5 { width: 38px; }
.c6 { width: 26px; }
.trips .ctr { text-align: center; }
.trips .when, .trips .num { text-align: right; }
th.when span + span { margin-left: 14px; }
.trips td.num { font-weight: bold; }
.trips td:first-child, .trips td:nth-child(2), .trips td.when { vertical-align: top; }
.trips td a:not(.fare), .legs li > a:not(.fare), .legs div a { color: #6f8bb0; text-decoration: underline; }
.trips input { appearance: none; display: block; margin: 0 auto; width: 6px; height: 6px; background: #fbfaf7; border: 1px solid #ccc8bc; border-radius: 2px; }
.trips input:checked { border: 0; background: #f4705a url("data:image/svg+xml,%3Csvg xmlns='http://www.w3.org/2000/svg' viewBox='0 0 6 6'%3E%3Cpath d='M1.2 3L2.6 4.4L5 1.2' fill='none' stroke='%23402622' stroke-width='1.1'/%3E%3C/svg%3E"); }
.fare { display: flex; align-items: center; gap: 1px; }
.summary { display: flex; align-items: center; height: 11px; margin-top: 8px; border-bottom: 1px solid var(--hair); line-height: 10px; }
.summary > span { width: 158px; }
.route { width: 62px; }
.tariff { flex: 1; }
.buy svg { margin: 0 1px 0 6px; }
.legs li { display: grid; grid-template-columns: 9px 88px 36px 1fr; align-items: center; height: 18px; background: linear-gradient(#43658c, #43658c) 3px 0 / 3px 100% no-repeat; }
.legs .first { height: 10px; }
.legs .ride { height: 16px; grid-template-columns: 9px 10px 177px 1fr; }
.legs .cut { height: 7px; }
.cut .tram { height: 5px; }
.node { width: 5px; height: 5px; margin-left: 2px; background: #fff; border: 1px solid #555; }
.plus { border: 1px solid #5b7ea6; border-radius: 50%; background: radial-gradient(#5b7ea6 25%, #fff 30%); }
.tram { width: 8px; height: 8px; background: #5f1061; color: #e3c9e4; font-size: 3px; line-height: 8px; text-align: center; overflow: hidden; }
.plan { gap: 2px; }
.plan::after { content: ""; width: 5px; height: 5px; border: 1px solid var(--link); }
.times { display: flex; flex-direction: column; line-height: 8px; }
.times span + span { border-top: 1px solid var(--hair); }
.times em { font-size: 4px; color: #2b4d7c; }
.note { align-self: start; }
.foot { flex: none; height: 9px; padding-left: 6px; background: var(--blue); color: #e9eff5; font: 5px/9px "DejaVu Serif Condensed", var(--serif); white-space: nowrap; }
.band { width: 8px; background: var(--blue); }
.photo { width: 6px; height: 100%; }
.photo + .band { width: 4px; }
.right { flex: 1; width: auto; border-left: 1px solid #c9d3de; }
.right i { display: block; height: 40px; border-bottom: 1px solid #7d9ab6; }
.scroll { flex: none; width: 6px; display: flex; flex-direction: column; background: #ddd4c3; font: 5px/8px var(--ui); text-align: center; color: #555; }
.scroll b { width: 6px; height: 128px; margin: 28px 0 auto; background: linear-gradient(90deg, #fdfbf7, #e6dfd2); border: 1px solid #c4b9a5; border-radius: 2px; }
.status { flex: none; height: 11px; display: flex; align-items: center; justify-content: space-between; padding: 0 3px; white-space: nowrap; }
.addons { display: flex; align-items: center; gap: 3px; }
.addons em { color: #f0202c; }
.stars { display: flex; }

/* result window over the main one */
.popup { position: absolute; left: 0; top: 97px; width: 304px; height: 330px; border: solid #10100f; border-width: 2px 2px 2px 0; }
.popup .titlebar { height: 10px; padding-left: 2px; border-width: 0 0 1px; background: linear-gradient(#5a6070, #3b424c); }
.popup .navbar { height: 15px; padding: 0; }
.popup .url { margin: 0 5px 0 0; padding-left: 0; border-left: 0; background: #f3efe8; }
.popup .url input { border: 0; padding: 0; }
.pop-view { flex: 1; min-height: 0; display: flex; background: #fff; font-family: var(--text); }
.login { flex: none; width: 53px; overflow: hidden; border-right: 1px solid #a7adb6; color: #4b6f98; white-space: nowrap; }
.swoosh { width: 52px; height: 8px; }
.cred { display: flex; flex-direction: column; gap: 3px; padding: 12px 0 0 2px; }
.cred input { width: 38px; height: 9px; padding-left: 1px; background: #e2e7ee; color: #444; }
.send { display: flex; align-items: center; gap: 4px; height: 12px; margin-top: 3px; padding-left: 3px; font: 5px/8px var(--serif); }
.hints { display: flex; flex-direction: column; margin: 1px 0 5px; font: 5px/7px var(--serif); }
.bar { height: 10px; background: var(--blue); }
.side-nav { display: flex; flex-direction: column; background: #dfe4ec; padding-bottom: 2px; }
.side-nav a, .side-nav i { height: 11px; line-height: 11px; border-bottom: 1px solid #d3dae5; }
.side-nav .on { font-weight: bold; }
.find { display: flex; align-items: center; gap: 8px; height: 20px; border-bottom: 1px solid var(--hair); }
.find input { width: 27px; height: 9px; background: #e2e7ee; }
.links a { display: block; height: 11px; line-height: 11px; border-bottom: 1px solid var(--hair); }
.pop-page { flex: 1; min-width: 0; display: flex; flex-direction: column; }
.clip { flex: 1; min-height: 0; overflow: hidden; }
.clip .body { width: 328px; padding-left: 4px; }
.corner { height: 20px; margin: 0 0 29px 227px; }
.popup .summary { margin-top: 8px; }
.popup .scroll b { height: 35px; margin-top: 18px; }
.hscroll { flex: none; height: 6px; display: flex; justify-content: space-between; background: #ddd4c3; font-size: 5px; line-height: 6px; padding-right: 12px; }
.hscroll b { width: 197px; background: linear-gradient(#fdfbf7, #e6dfd2); border: 1px solid #c4b9a5; border-radius: 0 3px 3px 0; }
.popup .status { padding: 0 2px 0 0; }
.cursor { position: absolute; left: 206px; top: 203px; width: 7px; height: 10px; }
```
